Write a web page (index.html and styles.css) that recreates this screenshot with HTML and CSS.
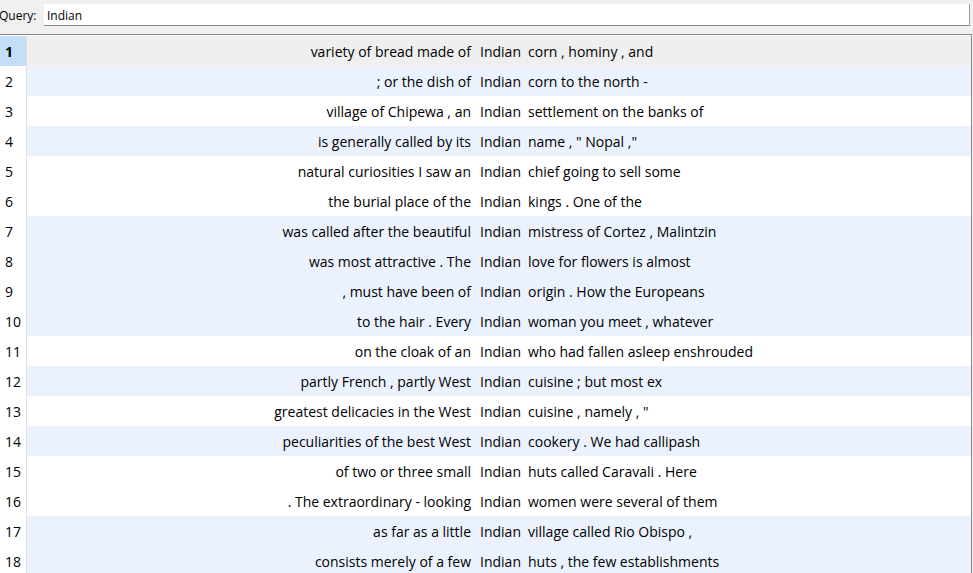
FILE: index.html
```html
<!DOCTYPE html>
<html>
<head>
<meta charset="utf-8">
<link rel="stylesheet" href="styles.css">
</head>
<body>
<div class="querybar">
  <span class="qlabel">Query:</span>
  <div class="qinput">Indian</div>
</div>
<div class="table">
  <div class="row sel"><div class="num">1</div><div class="left">variety of bread made of</div><div class="kw">Indian</div><div class="right">corn , hominy , and</div></div>
  <div class="row blue"><div class="num">2</div><div class="left">; or the dish of</div><div class="kw">Indian</div><div class="right">corn to the north -</div></div>
  <div class="row"><div class="num">3</div><div class="left">village of Chipewa , an</div><div class="kw">Indian</div><div class="right">settlement on the banks of</div></div>
  <div class="row blue"><div class="num">4</div><div class="left">is generally called by its</div><div class="kw">Indian</div><div class="right">name , " Nopal ,"</div></div>
  <div class="row"><div class="num">5</div><div class="left">natural curiosities I saw an</div><div class="kw">Indian</div><div class="right">chief going to sell some</div></div>
  <div class="row"><div class="num">6</div><div class="left">the burial place of the</div><div class="kw">Indian</div><div class="right">kings . One of the</div></div>
  <div class="row blue"><div class="num">7</div><div class="left">was called after the beautiful</div><div class="kw">Indian</div><div class="right">mistress of Cortez , Malintzin</div></div>
  <div class="row blue"><div class="num">8</div><div class="left">was most attractive . The</div><div class="kw">Indian</div><div class="right">love for flowers is almost</div></div>
  <div class="row blue"><div class="num">9</div><div class="left">, must have been of</div><div class="kw">Indian</div><div class="right">origin . How the Europeans</div></div>
  <div class="row blue"><div class="num">10</div><div class="left">to the hair . Every</div><div class="kw">Indian</div><div class="right">woman you meet , whatever</div></div>
  <div class="row"><div class="num">11</div><div class="left">on the cloak of an</div><div class="kw">Indian</div><div class="right">who had fallen asleep enshrouded</div></div>
  <div class="row blue"><div class="num">12</div><div class="left">partly French , partly West</div><div class="kw">Indian</div><div class="right">cuisine ; but most ex</div></div>
  <div class="row"><div class="num">13</div><div class="left">greatest delicacies in the West</div><div class="kw">Indian</div><div class="right">cuisine , namely , "</div></div>
  <div class="row blue"><div class="num">14</div><div class="left">peculiarities of the best West</div><div class="kw">Indian</div><div class="right">cookery . We had callipash</div></div>
  <div class="row"><div class="num">15</div><div class="left">of two or three small</div><div class="kw">Indian</div><div class="right">huts called Caravali . Here</div></div>
  <div class="row"><div class="num">16</div><div class="left">. The extraordinary - looking</div><div class="kw">Indian</div><div class="right">women were several of them</div></div>
  <div class="row blue"><div class="num">17</div><div class="left">as far as a little</div><div class="kw">Indian</div><div class="right">village called Rio Obispo ,</div></div>
  <div class="row blue"><div class="num">18</div><div class="left">consists merely of a few</div><div class="kw">Indian</div><div class="right">huts , the few establishments</div></div>
</div>
</body>
</html>
```

FILE: styles.css
```css
html, body {
  margin: 0;
  padding: 0;
  background: #f0f0f0;
  overflow: hidden;
}
body {
  font-family: "Open Sans", "Noto Sans", sans-serif;
  color: #000;
  width: 973px;
  height: 573px;
}
.querybar {
  height: 34px;
  display: flex;
  align-items: flex-start;
  box-sizing: border-box;
  padding-top: 4px;
}
.qlabel {
  font-size: 12px;
  width: 45px;
  margin-left: -1px;
  line-height: 24px;
  flex: none;
}
.qinput {
  width: 926px;
  height: 22px;
  box-sizing: border-box;
  background: #fff;
  border-right: 1px solid #9a9a9a;
  border-bottom: 1px solid #8a8a8a;
  font-size: 12px;
  line-height: 23px;
  padding-left: 3px;
}
.table {
  border-top: 1px solid #828790;
  border-right: 1px solid #828790;
  width: 972px;
  box-sizing: border-box;
  padding-top: 1px;
  background: #fff;
  height: 539px;
}
.row {
  display: grid;
  grid-template-columns: 27px 447px 49px 1fr;
  height: 30px;
  line-height: 32px;
  font-size: 14px;
  background: #fff;
}
.row.blue { background: #ebf2fd; }
.row.sel { background: #efefef; }
.num {
  background: #fff;
  border-right: 1px solid #e0e0e0;
  padding-left: 5px;
  white-space: nowrap;
}
.row.sel .num {
  background: #c3def5;
  font-weight: bold;
}
.left {
  text-align: right;
  padding-right: 3px;
  white-space: nowrap;
  overflow: hidden;
}
.kw {
  padding-left: 6px;
  white-space: nowrap;
}
.right {
  padding-left: 5px;
  white-space: nowrap;
  overflow: hidden;
}
```
